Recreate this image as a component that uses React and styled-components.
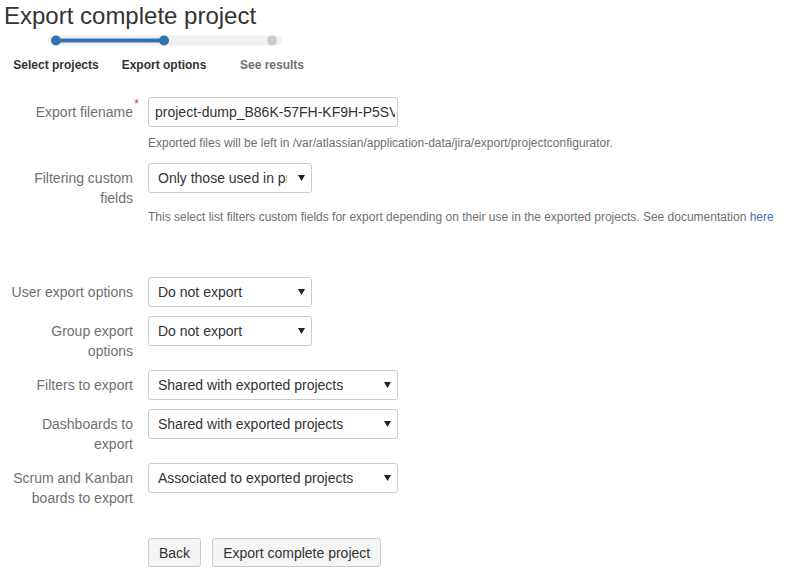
import React from 'react';
import styled, { createGlobalStyle } from 'styled-components';

const GlobalStyle = createGlobalStyle`
  body {
    margin: 0;
    background: #fff;
    font-family: "Liberation Sans", Arial, sans-serif;
    color: #333;
  }
`;

const Page = styled.div`
  width: 788px;
  height: 585px;
  overflow: hidden;
`;

const Title = styled.h1`
  margin: 2px 0 0 4px;
  font-size: 24px;
  line-height: 28px;
  font-weight: normal;
  color: #333;
`;

const Tracker = styled.div`
  width: 330px;
  margin-left: 2px;

  svg {
    display: block;
  }
`;

const TrackerLabels = styled.ol`
  display: flex;
  list-style: none;
  margin: 7px 0 0;
  padding: 0;
`;

const Step = styled.li`
  width: 108px;
  text-align: center;
  font-size: 12px;
  line-height: 16px;
  font-weight: bold;
  color: ${(p) => (p.$todo ? '#707070' : '#333')};
`;

const Form = styled.form`
  margin-top: 24px;
`;

const FieldGroup = styled.div`
  display: grid;
  grid-template-columns: 125px 1fr;
  column-gap: 15px;
  align-items: start;
  margin: ${(p) => (p.$spaced ? '49px' : '0')} 0 ${(p) => p.$bottom || '9px'} 8px;
`;

const Label = styled.label`
  position: relative;
  padding-top: 5px;
  text-align: right;
  font-size: 14px;
  line-height: 20px;
  color: #707070;
`;

const Required = styled.span`
  position: absolute;
  right: -6px;
  top: 1px;
  color: #d04437;
  font-size: 12px;
  line-height: 12px;
`;

const TextInput = styled.input`
  box-sizing: border-box;
  width: 250px;
  height: 30px;
  padding: 0 2px 0 6px;
  border: 1px solid #ccc;
  border-radius: 3px;
  font-family: inherit;
  font-size: 14px;
  color: #333;
  outline: none;
`;

const SelectWrap = styled.div`
  position: relative;
  width: ${(p) => (p.$wide ? '250px' : '164px')};
`;

const Select = styled.select`
  box-sizing: border-box;
  width: 100%;
  height: 30px;
  padding: 0 24px 0 9px;
  border: 1px solid #ccc;
  border-radius: 3px;
  background: #fff;
  appearance: none;
  font-family: inherit;
  font-size: 14px;
  color: #333;
  outline: none;
`;

const Arrow = styled.svg`
  position: absolute;
  right: 7px;
  top: 12px;
  pointer-events: none;
`;

const Description = styled.div`
  grid-column: 2;
  margin: ${(p) => p.$top || '0'} 0 2px;
  font-size: 12px;
  line-height: 18px;
  color: #707070;
`;

const Link = styled.a`
  color: #3b73af;
  text-decoration: none;
`;

const Buttons = styled.div`
  grid-column: 2;
  display: flex;
  gap: 11px;
`;

const Button = styled.button`
  height: 29px;
  padding: 0 10px;
  border: 1px solid #ccc;
  border-radius: 3px;
  background: #f5f5f5;
  font-family: inherit;
  font-size: 14px;
  color: #333;
`;

const Dropdown = ({ value, wide }) => (
  <SelectWrap $wide={wide}>
    <Select defaultValue={value}>
      <option>{value}</option>
    </Select>
    <Arrow width='7' height='6' viewBox='0 0 7 6'>
      <polygon points='0,0 7,0 3.5,6' fill='#222' />
    </Arrow>
  </SelectWrap>
);

const ProgressLine = () => (
  <svg width='330' height='20' viewBox='0 0 330 20'>
    <rect x='46' y='5.5' width='234' height='10' rx='5' fill='#f0f0f0' />
    <rect x='54' y='8.5' width='108' height='4' fill='#3572b0' />
    <circle cx='54' cy='10.5' r='5' fill='#3572b0' />
    <circle cx='162' cy='10.5' r='5' fill='#3572b0' />
    <circle cx='270' cy='10.5' r='5' fill='#ccc' />
  </svg>
);

const App = () => (
  <Page>
    <GlobalStyle />
    <Title>Export complete project</Title>
    <Tracker>
      <ProgressLine />
      <TrackerLabels>
        <Step>Select projects</Step>
        <Step>Export options</Step>
        <Step $todo>See results</Step>
      </TrackerLabels>
    </Tracker>

    <Form onSubmit={(e) => e.preventDefault()}>
      <FieldGroup>
        <Label>
          Export filename<Required>*</Required>
        </Label>
        <TextInput defaultValue='project-dump_B86K-57FH-KF9H-P5SV-2019' />
        <Description $top='7px'>
          Exported files will be left in /var/atlassian/application-data/jira/export/projectconfigurator.
        </Description>
      </FieldGroup>

      <FieldGroup>
        <Label>Filtering custom fields</Label>
        <Dropdown value='Only those used in projects' />
        <Description>
          This select list filters custom fields for export depending on their use in the exported projects. See
          documentation <Link href='#'>here</Link>
        </Description>
      </FieldGroup>

      <FieldGroup $spaced>
        <Label>User export options</Label>
        <Dropdown value='Do not export' />
      </FieldGroup>

      <FieldGroup>
        <Label>Group export options</Label>
        <Dropdown value='Do not export' />
      </FieldGroup>

      <FieldGroup>
        <Label>Filters to export</Label>
        <Dropdown wide value='Shared with exported projects' />
      </FieldGroup>

      <FieldGroup>
        <Label>Dashboards to export</Label>
        <Dropdown wide value='Shared with exported projects' />
      </FieldGroup>

      <FieldGroup $bottom='30px'>
        <Label>Scrum and Kanban boards to export</Label>
        <Dropdown wide value='Associated to exported projects' />
      </FieldGroup>

      <FieldGroup>
        <Buttons>
          <Button type='button'>Back</Button>
          <Button type='submit'>Export complete project</Button>
        </Buttons>
      </FieldGroup>
    </Form>
  </Page>
);

export default App;
